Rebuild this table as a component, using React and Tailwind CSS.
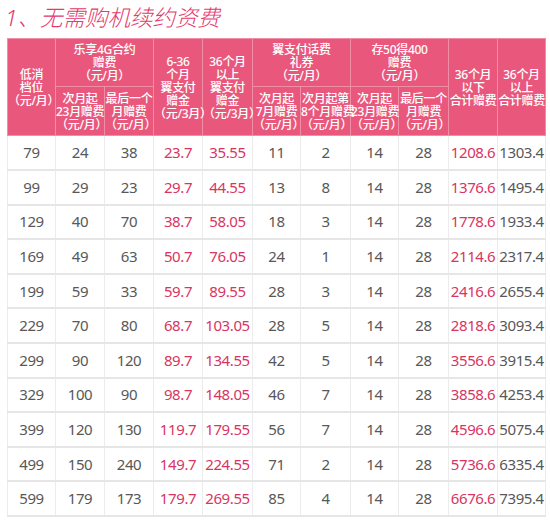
import React from 'react';

const rows = [
  ['79', '24', '38', '23.7', '35.55', '11', '2', '14', '28', '1208.6', '1303.4'],
  ['99', '29', '23', '29.7', '44.55', '13', '8', '14', '28', '1376.6', '1495.4'],
  ['129', '40', '70', '38.7', '58.05', '18', '3', '14', '28', '1778.6', '1933.4'],
  ['169', '49', '63', '50.7', '76.05', '24', '1', '14', '28', '2114.6', '2317.4'],
  ['199', '59', '33', '59.7', '89.55', '28', '3', '14', '28', '2416.6', '2655.4'],
  ['229', '70', '80', '68.7', '103.05', '28', '5', '14', '28', '2818.6', '3093.4'],
  ['299', '90', '120', '89.7', '134.55', '42', '5', '14', '28', '3556.6', '3915.4'],
  ['329', '100', '90', '98.7', '148.05', '46', '7', '14', '28', '3858.6', '4253.4'],
  ['399', '120', '130', '119.7', '179.55', '56', '7', '14', '28', '4596.6', '5075.4'],
  ['499', '150', '240', '149.7', '224.55', '71', '2', '14', '28', '5736.6', '6335.4'],
  ['599', '179', '173', '179.7', '269.55', '85', '4', '14', '28', '6676.6', '7395.4'],
];

// columns shown in red
const redCols = [3, 4, 9];
const widths = [48, 49, 49, 49, 50, 48, 50, 48, 50, 49, 48];

const th = "border border-[#f08ea7] px-0 font-medium text-white text-[12px] leading-[13px] tracking-[-0.3px] text-center align-middle";

function Lines({ items }) {
  return items.map((t, i) => <div key={i} className="whitespace-nowrap">{t}</div>);
}

export default function App() {
  return (
    <div className="w-[550px] h-[521px] bg-white overflow-hidden" style={{ fontFamily: '"Noto Sans", "Noto Sans CJK SC", sans-serif' }}>
      <h1 className="pl-[5px] pt-[3px] h-[38px] text-[22.5px] leading-[30px] font-light italic text-[#e43a6d]">
        1、无需购机续约资费
      </h1>
      <table className="ml-[7px] border-collapse table-fixed w-[538px]">
        <colgroup>
          {widths.map((w, i) => <col key={i} style={{ width: w }} />)}
        </colgroup>
        <thead className="bg-[#e9587c]">
          <tr className="h-[48px]">
            <th rowSpan={2} className={th}><Lines items={['低消', '档位', '（元/月）']} /></th>
            <th colSpan={2} className={th}><Lines items={['乐享4G合约', '赠费', '（元/月）']} /></th>
            <th rowSpan={2} className={th}><Lines items={['6-36', '个月', '翼支付', '赠金', '（元/3月）']} /></th>
            <th rowSpan={2} className={th}><Lines items={['36个月', '以上', '翼支付', '赠金', '（元/3月）']} /></th>
            <th colSpan={2} className={th}><Lines items={['翼支付话费', '礼券', '（元/月）']} /></th>
            <th colSpan={2} className={th}><Lines items={['存50得400', '赠费', '（元/月）']} /></th>
            <th rowSpan={2} className={th}><Lines items={['36个月', '以下', '合计赠费']} /></th>
            <th rowSpan={2} className={th}><Lines items={['36个月', '以上', '合计赠费']} /></th>
          </tr>
          <tr className="h-[49px]">
            <th className={th}><Lines items={['次月起', '23月赠费', '（元/月）']} /></th>
            <th className={th}><Lines items={['最后一个', '月赠费', '（元/月）']} /></th>
            <th className={th}><Lines items={['次月起', '7月赠费', '（元/月）']} /></th>
            <th className={th}><Lines items={['次月起第', '8个月赠费', '（元/月）']} /></th>
            <th className={th}><Lines items={['次月起', '23月赠费', '（元/月）']} /></th>
            <th className={th}><Lines items={['最后一个', '月赠费', '（元/月）']} /></th>
          </tr>
        </thead>
        <tbody>
          {rows.map((r, i) => (
            <tr key={i} className="h-[34.6px]">
              {r.map((v, j) => (
                <td
                  key={j}
                  className={`border-x border-x-[#ececec] border-b-2 border-b-[#e6e6e6] p-0 text-center text-[15px] tracking-[-0.4px] leading-none whitespace-nowrap ${redCols.includes(j) ? 'text-[#d93462]' : 'text-[#585858]'}`}
                >
                  {v}
                </td>
              ))}
            </tr>
          ))}
        </tbody>
      </table>
    </div>
  );
}
